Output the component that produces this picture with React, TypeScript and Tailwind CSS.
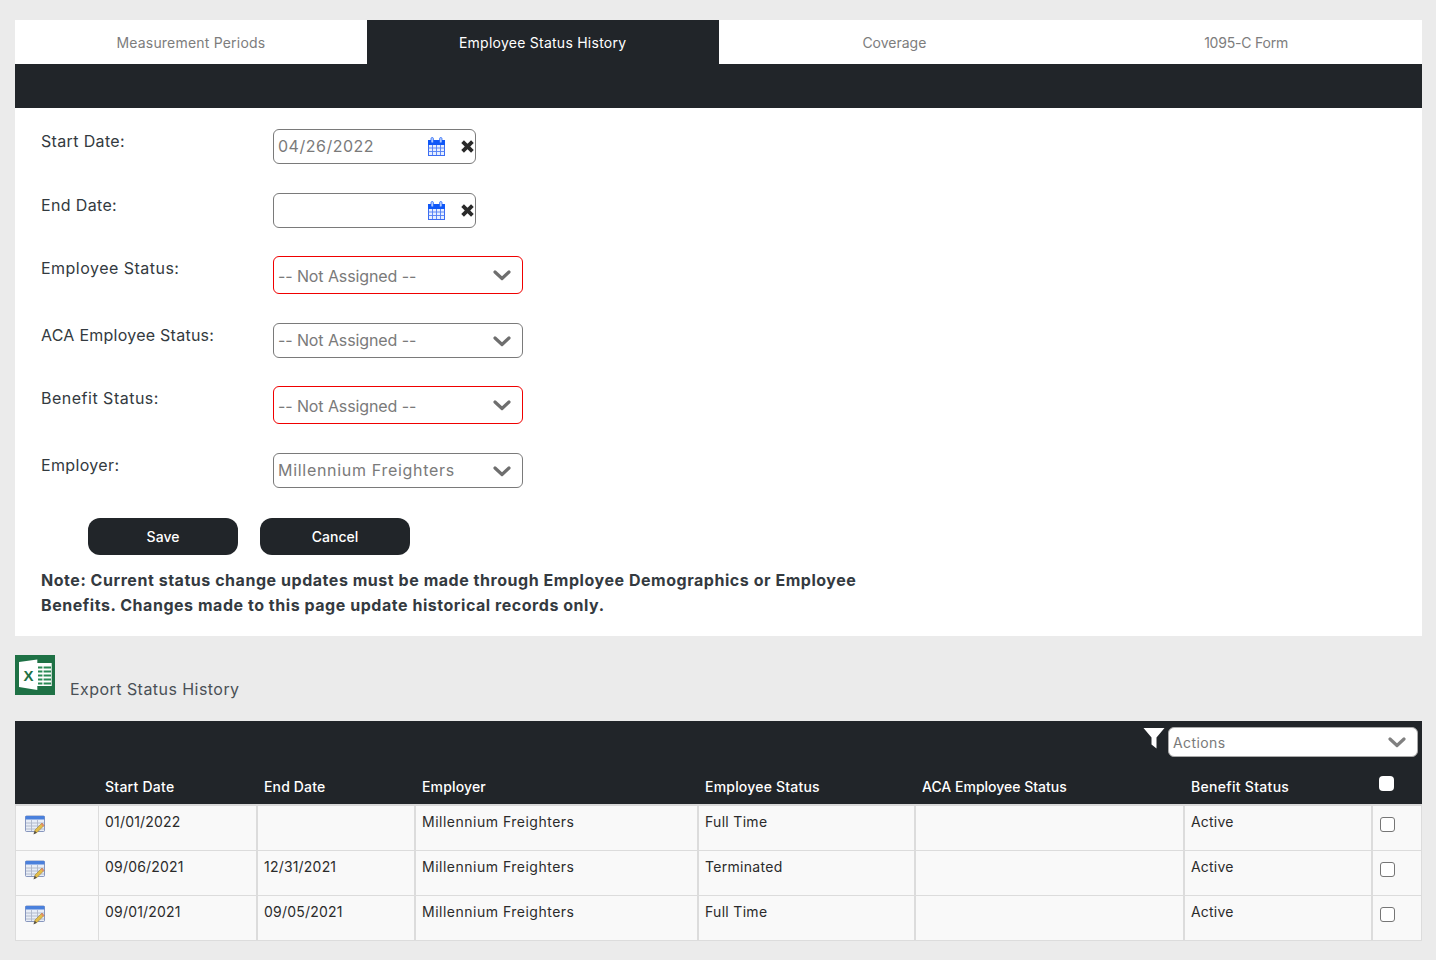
import React from "react";

const Chevron = ({ color = "#6e6e6e" }: { color?: string }) => (
  <svg width="18" height="12" viewBox="0 0 18 12" fill="none">
    <path d="M2 3 L9 9.5 L16 3" stroke={color} strokeWidth="3.2" strokeLinecap="round" strokeLinejoin="round" />
  </svg>
);

const Calendar = () => (
  <svg width="17" height="19" viewBox="0 0 17 19">
    <rect x="0.5" y="3.5" width="16" height="15" fill="#e6eeff" stroke="#3a6cf2" strokeWidth="1" />
    <rect x="0" y="3" width="17" height="5" fill="#0f57f7" />
    <rect x="3" y="0.5" width="2.4" height="5.5" rx="1.2" fill="#bcd2ff" stroke="#0f57f7" strokeWidth="0.7" />
    <rect x="11.6" y="0.5" width="2.4" height="5.5" rx="1.2" fill="#bcd2ff" stroke="#0f57f7" strokeWidth="0.7" />
    <path d="M0.5 11h16M0.5 14.5h16M4.5 8v10M8.5 8v10M12.5 8v10" stroke="#4f7df4" strokeWidth="0.9" />
  </svg>
);

const Cross = () => (
  <svg width="13" height="13" viewBox="0 0 13 13">
    <path d="M1.6 1.6 L11.4 11.4 M11.4 1.6 L1.6 11.4" stroke="#2a2a2a" strokeWidth="3.8" strokeLinecap="butt" />
  </svg>
);

const Funnel = () => (
  <svg width="22" height="22" viewBox="0 0 22 22">
    <path d="M0.5 1 H21.5 L13.5 10.5 V21.5 L8.5 17.5 V10.5 Z" fill="#fff" />
  </svg>
);

const Excel = () => (
  <svg width="40" height="40" viewBox="0 0 40 40">
    <rect width="40" height="40" fill="#1e7145" />
    <rect x="22" y="8" width="14.7" height="23" fill="#fff" />
    <path d="M23 12.5h13M23 16.5h13M23 20.5h13M23 24.5h13M23 28.5h13" stroke="#2a8a55" strokeWidth="2" />
    <path d="M28 8v23" stroke="#fff" strokeWidth="1.2" />
    <path d="M4 7 L22.3 4.5 V35 L4 32 Z" fill="#fff" />
    <text x="8.6" y="26" fontSize="15" fontWeight="700" fill="#1e7145" fontFamily="Liberation Sans, sans-serif">X</text>
  </svg>
);

const EditIcon = () => (
  <svg width="20" height="20" viewBox="0 0 20 20">
    <rect x="0.5" y="1" width="19" height="15.5" rx="1" fill="#e8edf6" stroke="#6d7fae" strokeWidth="0.8" />
    <rect x="0.5" y="1" width="19" height="3.5" fill="#4a80dc" />
    <path d="M1 8h18M1 11h18M1 14h18M6.5 5v11M12.5 5v11" stroke="#aeb6c8" strokeWidth="0.9" />
    <path d="M9 18.5 L10 15 L17 8 L19 10.5 L12 17.5 Z" fill="#e3bd49" stroke="#8a7430" strokeWidth="0.5" />
    <path d="M16 9 L17 8 L19 10.5 L18 11.5 Z" fill="#e5826f" />
    <path d="M8.5 19.5 L9.8 15.8 L11.8 17.8 Z" fill="#55504a" />
  </svg>
);

const labelCls = "w-[232px] shrink-0 text-[16px] leading-[24px] text-[#333a40]";

const DateField = ({ value, top }: { value?: string; top: string }) => (
  <div className={`flex ${top}`}>
    <div className={`${labelCls} tracking-[0.35px]`}>{value ? "Start Date:" : "End Date:"}</div>
    <div className="flex h-[35px] w-[203px] items-center rounded-[6px] border border-[#7a7a7a] bg-white pl-[4px]">
      <span className="flex-1 pb-[2px] text-[16px] tracking-[0.5px] text-[#7a7a7a]">{value}</span>
      <span className="mr-[16px] flex"><Calendar /></span>
      <span className="mr-[1px] flex"><Cross /></span>
    </div>
  </div>
);

const SelectField = ({ label, value, h, red, top, labelTrack, valueTrack }: { label: string; value: string; h: string; red?: boolean; top: string; labelTrack: string; valueTrack: string }) => (
  <div className={`flex ${top}`}>
    <div className={`${labelCls} ${labelTrack}`}>{label}</div>
    <div className={`flex ${h} w-[250px] items-center justify-between rounded-[6px] border ${red ? "border-[#f00000]" : "border-[#7a7a7a]"} bg-white pl-[4px] pr-[11px]`}>
      <span className={`text-[16px] ${valueTrack} text-[#7a7a7a] ${red ? "pt-[1px]" : "pb-[2px]"}`}>{value}</span>
      <Chevron />
    </div>
  </div>
);

const cols = ["w-[84px]", "w-[159px]", "w-[158px]", "w-[283px]", "w-[217px]", "w-[269px]", "w-[188px]", "w-[49px]"];
const headers = ["", "Start Date", "End Date", "Employer", "Employee Status", "ACA Employee Status", "Benefit Status"];
const headerTracks = ["", "tracking-[0.25px]", "tracking-[0.15px]", "tracking-[0.15px]", "tracking-[0.2px]", "tracking-[0px]", "tracking-[0.3px]"];
const cellTracks = ["tracking-[0.2px]", "tracking-[0.2px]", "tracking-[0.5px]", "tracking-[0.3px]", "tracking-[0.3px]", "tracking-[0.2px]"];

const rows = [
  ["01/01/2022", "", "Millennium Freighters", "Full Time", "", "Active"],
  ["09/06/2021", "12/31/2021", "Millennium Freighters", "Terminated", "", "Active"],
  ["09/01/2021", "09/05/2021", "Millennium Freighters", "Full Time", "", "Active"],
];

const tabs = [
  { t: "Measurement Periods", c: "tracking-[0.2px]" },
  { t: "Employee Status History", c: "tracking-[0.25px]" },
  { t: "Coverage", c: "tracking-[0px]" },
  { t: "1095-C Form", c: "tracking-[-0.2px]" },
];

export default function App() {
  return (
    <div className="min-h-[960px] bg-[#ebebeb] pl-[15px] pr-[14px] pt-[20px]" style={{ fontFamily: "Inter, 'Noto Sans', sans-serif" }}>
      <div className="grid h-[44px] grid-cols-4 bg-white">
        {tabs.map((t, i) => (
          <div
            key={t.t}
            className={`flex items-center justify-center pt-[1px] text-[14px] ${t.c} ${i === 1 ? "bg-[#212529] text-white" : "text-[#7d7d7d]"}`}
          >
            {t.t}
          </div>
        ))}
      </div>
      <div className="h-[44px] bg-[#212529]" />

      <div className="h-[528px] bg-white pl-[26px] pt-[21px]">
        <DateField value="04/26/2022" top="" />
        <DateField top="mt-[29px]" />
        <SelectField label="Employee Status:" value="-- Not Assigned --" h="h-[38px]" red top="mt-[28px]" labelTrack="tracking-[0.48px]" valueTrack="tracking-[-0.1px]" />
        <SelectField label="ACA Employee Status:" value="-- Not Assigned --" h="h-[35px]" top="mt-[29px]" labelTrack="tracking-[0.25px]" valueTrack="tracking-[-0.1px]" />
        <SelectField label="Benefit Status:" value="-- Not Assigned --" h="h-[38px]" red top="mt-[28px]" labelTrack="tracking-[0.5px]" valueTrack="tracking-[-0.1px]" />
        <SelectField label="Employer:" value="Millennium Freighters" h="h-[35px]" top="mt-[29px]" labelTrack="tracking-[0.35px]" valueTrack="tracking-[0.7px]" />

        <div className="ml-[47px] mt-[30px] flex gap-[22px]">
          <button className="h-[37px] w-[150px] rounded-[12px] bg-[#212529] text-[14px] font-medium text-white">Save</button>
          <button className="h-[37px] w-[150px] rounded-[12px] bg-[#212529] text-[14px] font-medium text-white">Cancel</button>
        </div>

        <p className="mt-[13px] w-[840px] text-[16px] font-bold leading-[25px] tracking-[0.54px] text-[#343a40]">
          Note: Current status change updates must be made through Employee Demographics or Employee Benefits. Changes made to this page update historical records only.
        </p>
      </div>

      <div className="flex h-[85px] pt-[19px]">
        <Excel />
        <span className="ml-[15px] mt-[22px] text-[16px] leading-[24px] tracking-[0.45px] text-[#4a5056]">Export Status History</span>
      </div>

      <div className="bg-[#212529]">
        <div className="flex h-[43px] items-start justify-end pr-[4px] pt-[6px]">
          <span className="mr-[3px] flex"><Funnel /></span>
          <div className="flex h-[30px] w-[250px] items-center justify-between rounded-[6px] border border-[#a9a9a9] bg-white pl-[4px] pr-[11px]">
            <span className="text-[14px] tracking-[0.4px] text-[#7a7a7a]">Actions</span>
            <Chevron color="#808080" />
          </div>
        </div>
        <div className="flex h-[40px] items-center pt-[5px]">
          {headers.map((h, i) => (
            <div key={i} className={`${cols[i]} pl-[6px] text-[14px] font-medium ${headerTracks[i]} text-white`}>{h}</div>
          ))}
          <div className={`${cols[7]} flex items-center pl-[6px]`}>
            <span className="mb-[6px] h-[15px] w-[15px] rounded-[4px] bg-white" />
          </div>
        </div>
      </div>

      <div className="border-t-[2px] border-[#d9d9d9]">
        {rows.map((r, ri) => (
          <div key={ri} className="flex h-[45px] border-b-[1.5px] border-[#dcdcdc] bg-[#f9f9f9] text-[14px] text-[#2b2b2b]">
            <div className={`${cols[0]} border-x-[1.5px] border-[#dcdcdc] pl-[9px] pt-[9px]`}><EditIcon /></div>
            {r.map((c, ci) => (
              <div key={ci} className={`${cols[ci + 1]} border-r-[2px] border-[#dcdcdc] pl-[6px] pt-[5px] ${cellTracks[ci]}`}>{c}</div>
            ))}
            <div className={`${cols[7]} border-r-[1.5px] border-[#dcdcdc] pl-[7px] pt-[11px]`}>
              <span className="block h-[15px] w-[15px] rounded-[3px] border border-[#767676] bg-white" />
            </div>
          </div>
        ))}
      </div>
    </div>
  );
}
